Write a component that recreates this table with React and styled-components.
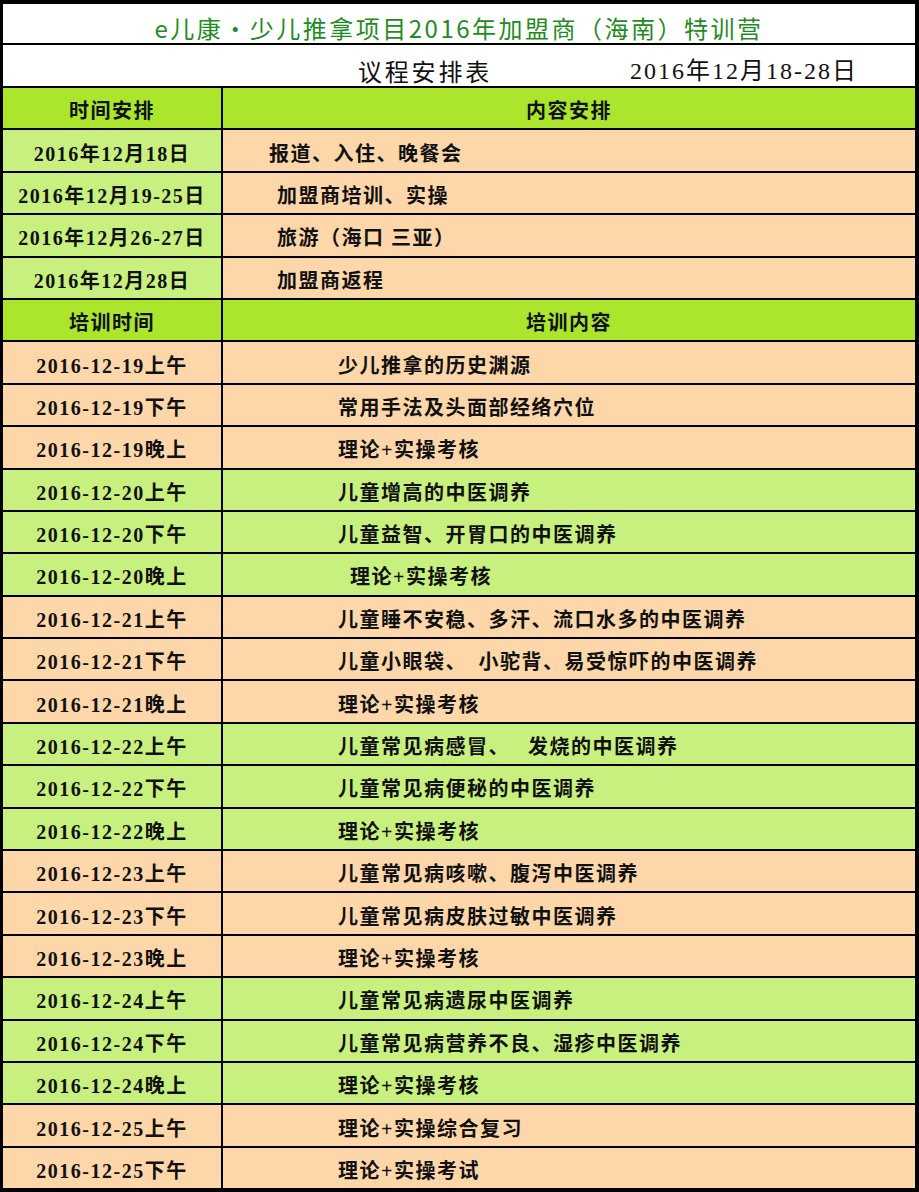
import React from 'react'
import styled, { createGlobalStyle } from 'styled-components'

const HEAD = '#abe62c'
const LIME = '#c8f07f'
const PEACH = '#fdd7aa'

const GlobalStyle = createGlobalStyle`
  html, body {
    margin: 0;
    padding: 0;
    background: #fff;
  }
`

const Sheet = styled.div`
  width: 919px;
  box-sizing: border-box;
  border: 4px solid #000;
  border-left-width: 3px;
  background: #fff;
`

const TitleRow = styled.div`
  height: 41px;
  display: flex;
  align-items: flex-end;
  justify-content: center;
  padding-bottom: 3px;
  box-sizing: border-box;
  border-bottom: 2px solid #000;
  font-family: "Noto Sans CJK SC", "Liberation Sans", sans-serif;
  font-size: 24px;
  line-height: 1;
  letter-spacing: 2.5px;
  color: #1f8c22;
`

const SubtitleRow = styled.div`
  height: 41px;
  display: flex;
  align-items: flex-end;
  padding: 0 0 3px 355px;
  box-sizing: border-box;
  line-height: 1;
  color: #111;
`

const SubTitle = styled.span`
  font-family: "Noto Sans CJK SC", sans-serif;
  font-size: 24px;
  letter-spacing: 2.8px;
`

const DateRange = styled.span`
  margin-left: 138px;
  font-family: "Liberation Serif", "Noto Sans CJK SC", serif;
  font-size: 24px;
  letter-spacing: 2px;
`

const Row = styled.div`
  display: grid;
  grid-template-columns: 218px 1fr;
  height: 42.4px;
  box-sizing: border-box;
  border-top: 2px solid #000;
`

const Cell = styled.div`
  display: flex;
  align-items: center;
  justify-content: ${(p) => (p.$center ? 'center' : 'flex-start')};
  padding-left: ${(p) => p.$indent || 0}px;
  padding-top: 3px;
  box-sizing: border-box;
  background: ${(p) => p.$bg};
  font-family: "Liberation Serif", "Noto Sans CJK SC", serif;
  font-weight: 700;
  font-size: 20px;
  letter-spacing: 1.5px;
  color: #111;
  white-space: pre;
  & + & {
    border-left: 2px solid #000;
  }
`

const schedule = [
  { date: '2016年12月18日', text: '报道、入住、晚餐会', indent: 46 },
  { date: '2016年12月19-25日', text: '加盟商培训、实操', indent: 54 },
  { date: '2016年12月26-27日', text: '旅游（海口 三亚）', indent: 54 },
  { date: '2016年12月28日', text: '加盟商返程', indent: 54 }
]

const training = [
  ['2016-12-19上午', '少儿推拿的历史渊源', PEACH],
  ['2016-12-19下午', '常用手法及头面部经络穴位', PEACH],
  ['2016-12-19晚上', '理论+实操考核', PEACH],
  ['2016-12-20上午', '儿童增高的中医调养', LIME],
  ['2016-12-20下午', '儿童益智、开胃口的中医调养', LIME],
  ['2016-12-20晚上', '理论+实操考核', LIME, 127],
  ['2016-12-21上午', '儿童睡不安稳、多汗、流口水多的中医调养', PEACH],
  ['2016-12-21下午', '儿童小眼袋、\u3000小驼背、易受惊吓的中医调养', PEACH],
  ['2016-12-21晚上', '理论+实操考核', PEACH],
  ['2016-12-22上午', '儿童常见病感冒、\u3000 发烧的中医调养', LIME],
  ['2016-12-22下午', '儿童常见病便秘的中医调养', LIME],
  ['2016-12-22晚上', '理论+实操考核', LIME],
  ['2016-12-23上午', '儿童常见病咳嗽、腹泻中医调养', PEACH],
  ['2016-12-23下午', '儿童常见病皮肤过敏中医调养', PEACH],
  ['2016-12-23晚上', '理论+实操考核', PEACH],
  ['2016-12-24上午', '儿童常见病遗尿中医调养', LIME],
  ['2016-12-24下午', '儿童常见病营养不良、湿疹中医调养', LIME],
  ['2016-12-24晚上', '理论+实操考核', LIME],
  ['2016-12-25上午', '理论+实操综合复习', PEACH],
  ['2016-12-25下午', '理论+实操考试', PEACH]
]

export default function App() {
  return (
    <>
      <GlobalStyle />
      <Sheet>
        <TitleRow>e儿康・少儿推拿项目2016年加盟商（海南）特训营</TitleRow>
        <SubtitleRow>
          <SubTitle>议程安排表</SubTitle>
          <DateRange>2016年12月18-28日</DateRange>
        </SubtitleRow>

        <Row>
          <Cell $bg={HEAD} $center>时间安排</Cell>
          <Cell $bg={HEAD} $center>内容安排</Cell>
        </Row>
        {schedule.map((s) => (
          <Row key={s.date}>
            <Cell $bg={LIME} $center>{s.date}</Cell>
            <Cell $bg={PEACH} $indent={s.indent}>{s.text}</Cell>
          </Row>
        ))}

        <Row>
          <Cell $bg={HEAD} $center>培训时间</Cell>
          <Cell $bg={HEAD} $center>培训内容</Cell>
        </Row>
        {training.map(([time, topic, bg, indent]) => (
          <Row key={time}>
            <Cell $bg={bg} $center>{time}</Cell>
            <Cell $bg={bg} $indent={indent || 115}>{topic}</Cell>
          </Row>
        ))}
      </Sheet>
    </>
  )
}
